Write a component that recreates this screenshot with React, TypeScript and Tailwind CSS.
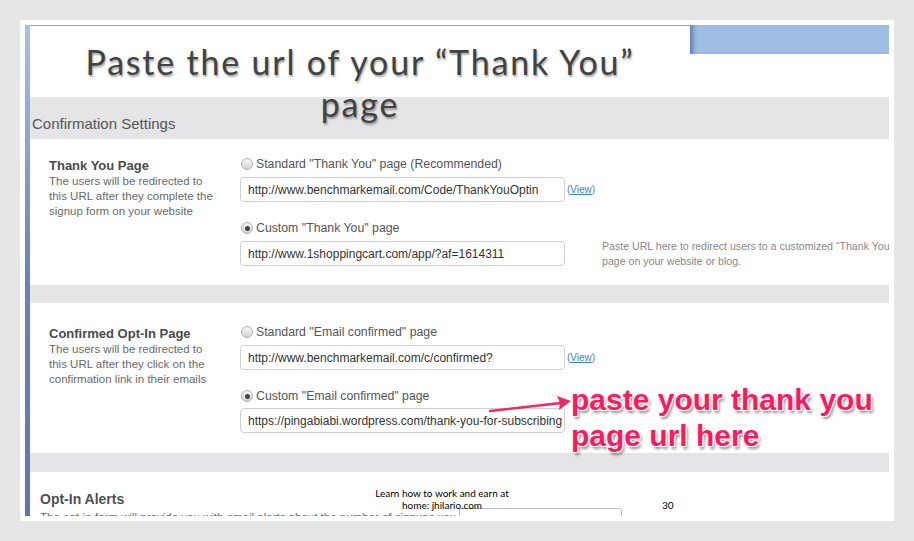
const ui = { fontFamily: '"Liberation Sans", Arial, sans-serif' };

function Radio({ checked }: { checked?: boolean }) {
  return (
    <span className="flex h-[12px] w-[12px] items-center justify-center rounded-full border border-[#b5b5b5] bg-gradient-to-b from-[#f4f4f4] to-[#d6d6d6]">
      {checked && <span className="h-[5px] w-[5px] rounded-full bg-[#444]" />}
    </span>
  );
}

function Field({ value, view }: { value: string; view?: boolean }) {
  return (
    <div className="flex items-center">
      <div className="flex h-[25px] w-[325px] items-center overflow-hidden whitespace-nowrap rounded-[4px] border border-[#cfcfcf] px-[7px] text-[12px] text-[#333]">
        {value}
      </div>
      {view && (
        <span className="ml-[2px] text-[10px] text-[#3c7fc3]">
          (<span className="underline">View</span>)
        </span>
      )}
    </div>
  );
}

function Option({ label, checked }: { label: string; checked?: boolean }) {
  return (
    <div className="flex h-[16px] items-center gap-[3px] pl-[1px] text-[12.3px] text-[#555]">
      <Radio checked={checked} />
      <span>{label}</span>
    </div>
  );
}

function Band({ h }: { h: string }) {
  return <div className={`${h} bg-[#e5e5e7]`} />;
}

export default function App() {
  return (
    <div className="h-[541px] w-[914px] overflow-hidden bg-[#e6e6e6] pl-[20px] pt-[20px]" style={ui}>
      <div className="relative flex h-[501px] w-[874px] bg-white pb-[5px] pl-[5px] pr-[5px] pt-[5px]">
        {/* screenshot */}
        <div className="flex h-[491px] w-[864px] overflow-hidden">
          <div className="w-[5px] bg-gradient-to-b from-[#a9c1e6] via-[#6386be] to-[#5878b0]" />
          <div className="flex w-[859px] flex-col">
            <div className="flex h-[72px] border-t border-[#8ea8d4]">
              <div className="flex-1" />
              <div className="-mt-[1px] h-[29px] w-[199px] bg-[#9fbee6] shadow-[inset_6px_0_5px_-3px_rgba(60,80,120,0.6)]" />
            </div>
            <div className="flex h-[42px] items-end bg-[#e5e5e7] pb-[4px] pl-[2px] text-[15px] text-[#555]">
              Confirmation Settings
            </div>

            {/* thank you page */}
            <div className="flex h-[146px]">
              <div className="w-[210px] pl-[19px] pt-[19px]">
                <div className="text-[13px] font-bold leading-[16px] text-[#4a4a4a]">Thank You Page</div>
                <div className="w-[170px] text-[11.5px] leading-[15px] text-[#6a6a6a]">
                  The users will be redirected to this URL after they complete the signup form on your website
                </div>
              </div>
              <div className="w-[362px] pt-[17px]">
                <Option label={'Standard "Thank You" page (Recommended)'} />
                <div className="mt-[5px]">
                  <Field value="http://www.benchmarkemail.com/Code/ThankYouOptin" view />
                </div>
                <div className="mt-[18px]">
                  <Option label={'Custom "Thank You" page'} checked />
                </div>
                <div className="mt-[5px]">
                  <Field value="http://www.1shoppingcart.com/app/?af=1614311" />
                </div>
              </div>
              <div className="flex-1 overflow-hidden whitespace-nowrap pt-[100px] text-[10.6px] leading-[15px] text-[#888]">
                <div>Paste URL here to redirect users to a customized “Thank You”</div>
                <div>page on your website or blog.</div>
              </div>
            </div>
            <Band h="h-[18px]" />

            {/* confirmed opt-in */}
            <div className="flex h-[150px]">
              <div className="w-[210px] pl-[19px] pt-[23px]">
                <div className="text-[13px] font-bold leading-[16px] text-[#4a4a4a]">Confirmed Opt-In Page</div>
                <div className="w-[170px] text-[11.5px] leading-[15px] text-[#6a6a6a]">
                  The users will be redirected to this URL after they click on the confirmation link in their emails
                </div>
              </div>
              <div className="w-[362px] pt-[21px]">
                <Option label={'Standard "Email confirmed" page'} />
                <div className="mt-[5px]">
                  <Field value="http://www.benchmarkemail.com/c/confirmed?" view />
                </div>
                <div className="mt-[18px]">
                  <Option label={'Custom "Email confirmed" page'} checked />
                </div>
                <div className="mt-[4px]">
                  <Field value="https://pingabiabi.wordpress.com/thank-you-for-subscribing" />
                </div>
              </div>
            </div>
            <Band h="h-[19px]" />

            {/* opt-in alerts */}
            <div className="flex h-[44px] overflow-hidden">
              <div className="w-[420px] pl-[10px] pt-[19px]">
                <div className="text-[14px] font-bold leading-[16px] text-[#505050]">Opt-In Alerts</div>
                <div className="mt-[3px] whitespace-nowrap text-[11.5px] leading-[15px] text-[#6a6a6a]">
                  The opt-in form will provide you with email alerts about the number of signups you
                </div>
              </div>
              <div className="pl-[9px] pt-[36px]">
                <div className="h-[20px] w-[163px] rounded-[3px] border border-[#bbb] px-[6px] pt-[3px] text-[11px] text-[#444]">
                  No Notification
                </div>
              </div>
            </div>
          </div>
        </div>

        {/* slide title */}
        <div
          className="absolute left-0 top-[21px] w-[680px] text-center text-[34px] leading-[42px] tracking-[1.8px] text-[#424242] [text-shadow:1px_2px_2px_rgba(0,0,0,0.35)]"
          style={{ fontFamily: 'Lato, "Open Sans", sans-serif' }}
        >
          Paste the url of your “Thank You”
          <br />
          page
        </div>

        {/* annotation */}
        <svg className="absolute left-[465px] top-[372px]" width="95" height="26" viewBox="0 0 95 26">
          <path d="M5 19 Q40 15 76 11" stroke="#ee2a62" strokeWidth="2.5" fill="none" strokeLinecap="round" />
          <path d="M86 9 L72 4 L75 11 L74 18 Z" fill="#ee2a62" />
        </svg>
        <div
          className="absolute left-[551px] top-[362px] text-[30px] font-bold leading-[36px] text-[#fb1a5e] [text-shadow:-1px_-1px_0_#fff,1px_-1px_0_#fff,-1px_1px_0_#fff,1px_1px_0_#fff,2px_3px_3px_rgba(0,0,0,0.45)]"
          style={ui}
        >
          paste your thank you
          <br />
          page url here
        </div>

        {/* slide footer */}
        <div
          className="absolute left-[342px] top-[467px] w-[160px] text-center text-[10px] leading-[12px] text-black"
          style={{ fontFamily: 'Lato, "Open Sans", sans-serif' }}
        >
          Learn how to work and earn at
          <br />
          home: jhilario.com
        </div>
        <div
          className="absolute left-[642px] top-[479px] text-[10px] leading-[12px] text-black"
          style={{ fontFamily: 'Lato, "Open Sans", sans-serif' }}
        >
          30
        </div>
      </div>
    </div>
  );
}
